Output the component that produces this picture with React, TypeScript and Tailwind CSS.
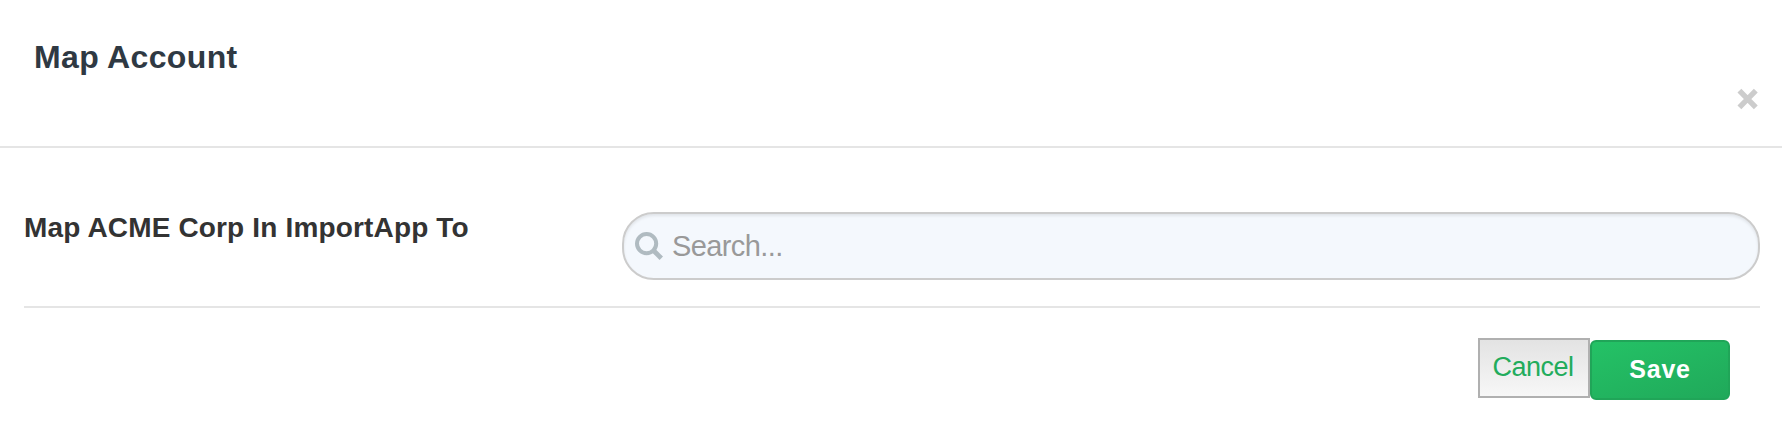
import { useState } from "react";

function CloseIcon() {
    return (
        <svg width="22" height="22" viewBox="0 0 22 22" fill="none" stroke="#cccccc" strokeWidth="5.4">
            <path d="M2.4 2.6L18.8 19.4M18.8 2.6L2.4 19.4" />
        </svg>
    );
}

function SearchIcon() {
    return (
        <svg className="shrink-0" width="28" height="28" viewBox="0 0 28 28" fill="none" stroke="#b0bbc1" strokeWidth="4">
            <circle cx="11.6" cy="11.6" r="9.6" />
            <path d="M17.5 17.5L26.3 26.3" strokeWidth="4.8" />
        </svg>
    );
}

export default function App() {
    const [query, setQuery] = useState("");

    return (
        <div className="h-[448px] w-full bg-white font-['Liberation_Sans',Arial,sans-serif]">
            {/* Header */}
            <div className="flex h-[148px] items-start justify-between border-b-2 border-[#e5e5e5] pl-[34px] pr-[23px]">
                <h3 className="mt-[37px] whitespace-nowrap text-[32px] font-bold leading-10 tracking-[0.35px] text-[#2f3943]">Map Account</h3>
                <button type="button" aria-label="Close" className="mt-[88px]">
                    <CloseIcon />
                </button>
            </div>

            <div className="px-[22px] pl-6 pt-16">
                {/* Account mapping */}
                <div className="flex h-24 items-start border-b-2 border-[#e5e5e5]">
                    <label htmlFor="account" className="w-[598px] whitespace-nowrap text-[28px] font-bold leading-8 tracking-[0.16px] text-[#333333]">
                        Map ACME Corp In ImportApp To
                    </label>
                    <div className="flex h-[68px] flex-1 items-center gap-[9px] rounded-[32px] border-2 border-[#cccccc] bg-[#f4f8fd] pl-[11px] pr-4 shadow-[inset_0_2px_3px_rgba(0,0,0,0.08)]">
                        <SearchIcon />
                        <input
                            id="account"
                            value={query}
                            onChange={(e) => setQuery(e.target.value)}
                            placeholder="Search..."
                            className="h-10 flex-1 bg-transparent pt-0.5 text-[29px] tracking-[-0.6px] outline-none placeholder:text-[#999999]"
                        />
                    </div>
                </div>

                {/* Actions */}
                <div className="flex justify-end pr-[30px] pt-[30px]">
                    <button
                        type="button"
                        className="h-[60px] w-28 border-2 border-[#b0b0b0] bg-linear-to-b from-[#e3e3e3] to-[#f7f7f7] pb-0.5 pr-0.5 text-[27px] tracking-[-0.5px] text-[#22ac5c]"
                    >
                        Cancel
                    </button>
                    <button
                        type="button"
                        className="mt-0.5 h-[60px] w-[140px] rounded-md border-2 border-[#20a558] bg-linear-160 from-[#24c266] to-[#20a95a] text-[25px] font-bold tracking-[0.8px] text-white"
                    >
                        Save
                    </button>
                </div>
            </div>
        </div>
    );
}
